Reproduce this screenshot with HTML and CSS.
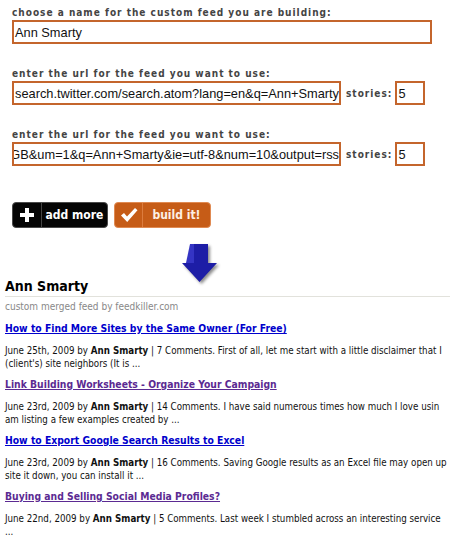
FILE: index.html
```html
<!DOCTYPE html>
<html>
  <head>
    <meta charset="UTF-8" />
    <title>feedkiller - build a feed</title>
    <link rel="stylesheet" href="styles.css">
  </head>
  <body>
    <!-- feed builder form -->
    <div class="builder">
      <div class="field">
        <div class="label">choose a name for the custom feed you are building:</div>
        <div class="input input-name"><span>Ann Smarty</span></div>
      </div>

      <div class="field">
        <div class="label">enter the url for the feed you want to use:</div>
        <div class="row">
          <div class="input input-url"><span>search.twitter.com/search.atom?lang=en&amp;q=Ann+Smarty</span></div>
          <span class="stories">stories:</span>
          <div class="input input-count"><span>5</span></div>
        </div>
      </div>

      <div class="field">
        <div class="label">enter the url for the feed you want to use:</div>
        <div class="row">
          <div class="input input-url scrolled"><span>GB&amp;um=1&amp;q=Ann+Smarty&amp;ie=utf-8&amp;num=10&amp;output=rss</span></div>
          <span class="stories">stories:</span>
          <div class="input input-count"><span>5</span></div>
        </div>
      </div>

      <div class="actions">
        <button class="btn btn-add">
          <span class="btn-icon">
            <svg width="16" height="16" viewBox="0 0 16 16"><path d="M6 1h4v5h5v4h-5v5H6v-5H1V6h5z" fill="#fff"/></svg>
          </span>
          <span class="btn-text">add more</span>
        </button>
        <button class="btn btn-build">
          <span class="btn-icon">
            <svg width="18" height="16" viewBox="0 0 18 16"><path d="M1 8.5l3-2.5 3 3.5L15 1l2.5 2.2L7.2 15z" fill="#fff"/></svg>
          </span>
          <span class="btn-text">build it!</span>
        </button>
      </div>
    </div>

    <div class="arrow">
      <svg width="40" height="42" viewBox="0 0 40 42">
        <path d="M8 0h18v19h9L17.5 38 0 19h8z" fill="#1d1da6"/>
        <path d="M8 0h4v19H4z" fill="#3434c4"/>
      </svg>
    </div>

    <!-- resulting merged feed -->
    <div class="feed">
      <h1 class="feed-title">Ann Smarty</h1>
      <div class="feed-sub">custom merged feed by feedkiller.com</div>

      <div class="item">
        <a class="item-link" href="#">How to Find More Sites by the Same Owner (For Free)</a>
        <p class="meta">June 25th, 2009 by <b>Ann Smarty</b> | 7 Comments. First of all, let me start with a little disclaimer that I<br>(client's) site neighbors (It is ...</p>
      </div>

      <div class="item">
        <a class="item-link visited" href="#">Link Building Worksheets - Organize Your Campaign</a>
        <p class="meta">June 23rd, 2009 by <b>Ann Smarty</b> | 14 Comments. I have said numerous times how much I love usin<br>am listing a few examples created by ...</p>
      </div>

      <div class="item">
        <a class="item-link" href="#">How to Export Google Search Results to Excel</a>
        <p class="meta">June 23rd, 2009 by <b>Ann Smarty</b> | 16 Comments. Saving Google results as an Excel file may open up<br>site it down, you can install it ...</p>
      </div>

      <div class="item">
        <a class="item-link visited" href="#">Buying and Selling Social Media Profiles?</a>
        <p class="meta">June 22nd, 2009 by <b>Ann Smarty</b> | 5 Comments. Last week I stumbled across an interesting service<br>...</p>
      </div>
    </div>
  </body>
</html>
```

FILE: styles.css
```css
/* 页面基础 */
body {
  margin: 0;
  padding: 0;
  background: #fff;
  overflow: hidden;
  font-family: 'DejaVu Sans', Verdana, sans-serif;
  font-stretch: condensed;
}

/* 表单部分 */
.builder {
  padding: 6px 0 0 12px;
}

.field {
  margin-bottom: 23px;
}

.label {
  font-size: 10px;
  font-weight: bold;
  letter-spacing: 1px;
  line-height: 14px;
  color: #444;
}

.row {
  display: flex;
  align-items: center;
}

.input {
  box-sizing: border-box;
  height: 24px;
  border: 2px solid #c4652c;
  display: flex;
  align-items: center;
  overflow: hidden;
  white-space: nowrap;
  font-family: 'Liberation Sans', Arial, sans-serif;
  font-stretch: normal;
  font-size: 12.8px;
  color: #111;
  padding-left: 1px;
}

.input-name {
  width: 420px;
}

.input-url {
  width: 329px;
}

.input-url.scrolled {
  justify-content: flex-end;
  padding: 0;
}

.input-count {
  width: 30px;
}

.stories {
  font-size: 10px;
  font-weight: bold;
  letter-spacing: 1px;
  color: #444;
  margin: 0 3px 0 5px;
}

/* 按钮 */
.actions {
  display: flex;
  gap: 6px;
  margin-top: 36px;
}

.btn {
  box-sizing: border-box;
  height: 26px;
  display: flex;
  align-items: stretch;
  padding: 0;
  border-radius: 4px;
  cursor: pointer;
  font-family: inherit;
  font-stretch: condensed;
  font-size: 12px;
  font-weight: bold;
  color: #fff;
}

.btn-icon {
  display: flex;
  align-items: center;
  justify-content: center;
}

.btn-text {
  display: flex;
  align-items: center;
  justify-content: center;
  flex: 1;
}

.btn-add {
  width: 96px;
  background: #050505;
  border: 1px solid #4a4a4a;
}

.btn-add .btn-icon {
  width: 28px;
  border-right: 1px solid #444;
}

.btn-build {
  width: 97px;
  background: #c65c17;
  border: 1px solid #e08a52;
  color: #fdf0e4;
}

.btn-build .btn-icon {
  width: 27px;
  border-right: 1px solid #dc7c3e;
}

/* 箭头 */
.arrow {
  margin: 16px 0 -6px 182px;
  height: 40px;
}

.arrow svg {
  filter: drop-shadow(2px 2px 1.5px rgba(0, 0, 0, 0.45));
}

/* 生成的 feed */
.feed {
  padding-left: 5px;
  width: 445px;
  overflow: hidden;
}

.feed-title {
  margin: 0;
  font-size: 14px;
  line-height: 17px;
  font-weight: bold;
  color: #000;
  padding-bottom: 1px;
  border-bottom: 1px solid #e2e2dc;
}

.feed-sub {
  margin: 3px 0 9px;
  font-size: 10px;
  line-height: 13px;
  color: #888;
}

.item-link {
  display: block;
  font-size: 10.3px;
  line-height: 13px;
  font-weight: bold;
  color: #0000cc;
  text-decoration: underline;
  margin-bottom: 9px;
}

.item-link.visited {
  color: #5b2a92;
}

.meta {
  margin: 0 0 8px;
  font-size: 9.7px;
  line-height: 13px;
  color: #111;
  white-space: nowrap;
}
```
